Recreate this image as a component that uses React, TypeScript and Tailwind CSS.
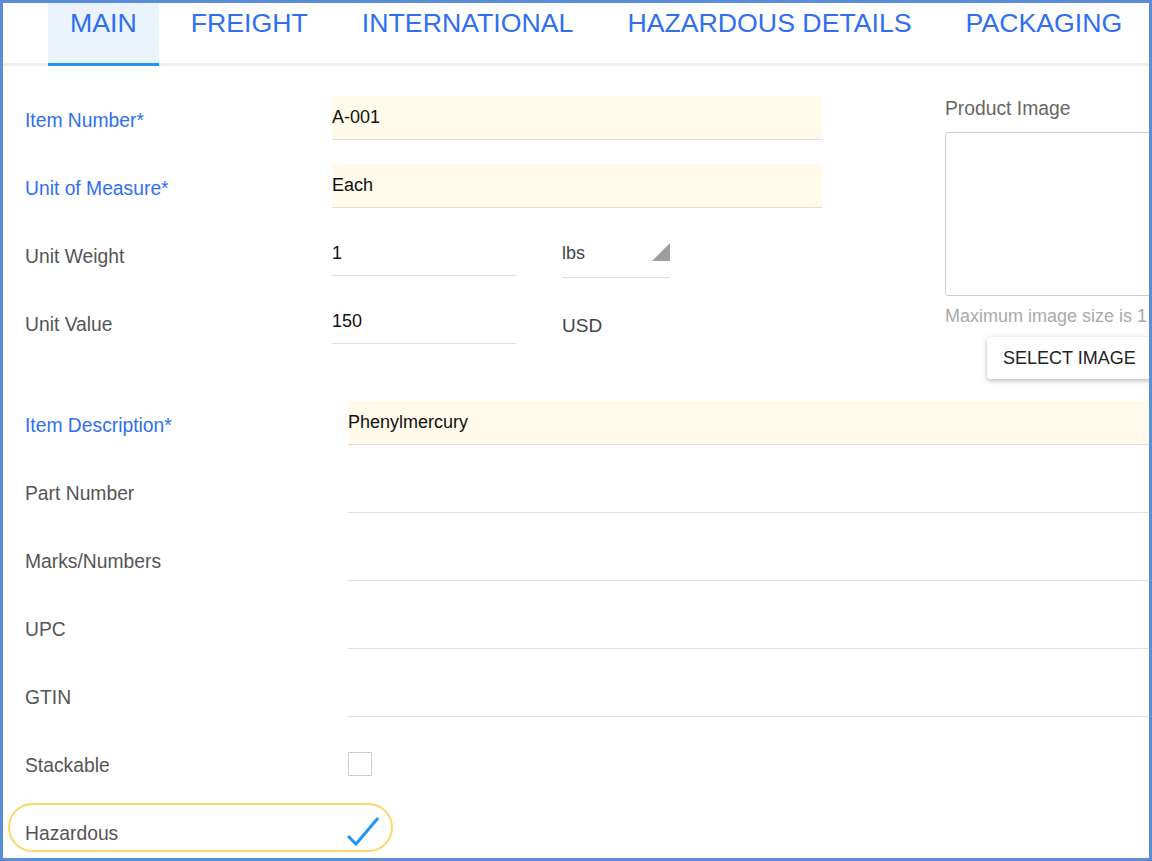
import React from "react";

const tabs = ["MAIN", "FREIGHT", "INTERNATIONAL", "HAZARDOUS DETAILS", "PACKAGING"];

function Label({ text, required }: { text: string; required?: boolean }) {
  return (
    <div
      className={
        "text-[19.3px] leading-[24px] pt-[5px] " +
        (required ? "text-[#2f6ff0]" : "text-[#555555]")
      }
    >
      {text}
    </div>
  );
}

export default function App() {
  return (
    <div className="w-[1152px] h-[861px] border-[3px] border-[#5a8fd8] bg-white overflow-hidden font-['Liberation_Sans',Arial,sans-serif]">
      {/* Tabs */}
      <div className="h-[63px] flex items-start gap-[10px] pl-[45px] border-b-[3px] border-[#eeeeee]">
        {tabs.map((t, i) => (
          <div
            key={t}
            className={
              "h-[63px] px-[22px] text-[26.7px] leading-[40px] text-[#2f6ff0] whitespace-nowrap " +
              (i === 0 ? "bg-[#ebf3fd] border-b-[3px] border-[#2196f3]" : "")
            }
          >
            {t}
          </div>
        ))}
      </div>

      {/* Body */}
      <div className="pl-[22px] pt-[30px]">
        {/* Section 1 */}
        <div className="flex items-start">
          <div className="w-[797px] shrink-0 flex flex-col gap-[24px]">
            <div className="flex items-center h-[44px]">
              <div className="w-[307px] shrink-0">
                <Label text="Item Number*" required />
              </div>
              <div className="w-[490px] h-[44px] bg-[#fffaea] border-b border-[#e0e0e0] flex items-center text-[18px] text-[#111] leading-none pb-[2px]">
                A-001
              </div>
            </div>
            <div className="flex items-center h-[44px]">
              <div className="w-[307px] shrink-0">
                <Label text="Unit of Measure*" required />
              </div>
              <div className="w-[490px] h-[44px] bg-[#fffaea] border-b border-[#e0e0e0] flex items-center text-[18px] text-[#111] leading-none pb-[2px]">
                Each
              </div>
            </div>
            <div className="flex items-center h-[44px]">
              <div className="w-[307px] shrink-0">
                <Label text="Unit Weight" />
              </div>
              <div className="w-[184px] h-[44px] border-b border-[#e0e0e0] flex items-center text-[18px] text-[#111] leading-none pb-[2px]">
                1
              </div>
              <div className="ml-[46px] w-[108px] h-[46px] mt-[2px] border-b border-[#e0e0e0] flex items-center justify-between text-[18px] text-[#444] leading-none pb-[4px]">
                <span>lbs</span>
                <svg width="18" height="18" viewBox="0 0 18 18" className="mb-[1px]">
                  <polygon points="18,0 18,18 0,18" fill="#9e9e9e" />
                </svg>
              </div>
            </div>
            <div className="flex items-center h-[44px]">
              <div className="w-[307px] shrink-0">
                <Label text="Unit Value" />
              </div>
              <div className="w-[184px] h-[44px] border-b border-[#e0e0e0] flex items-center text-[18px] text-[#111] leading-none pb-[2px]">
                150
              </div>
              <div className="ml-[46px] text-[19px] text-[#444] leading-[24px] pt-[7px]">USD</div>
            </div>
          </div>

          {/* Product image column */}
          <div className="ml-[123px] w-[260px] shrink-0 flex flex-col">
            <div className="text-[19.3px] leading-[24px] pt-[1px] text-[#666666]">Product Image</div>
            <div className="mt-[11px] h-[164px] border border-[#cfcfcf] rounded-[3px]" />
            <div className="mt-[9px] text-[18px] leading-[22px] text-[#aaaaaa] whitespace-nowrap">
              Maximum image size is 1 MB
            </div>
            <div className="mt-[10px] ml-[42px] w-[170px] h-[42px] bg-white rounded-[3px] shadow-[0_2px_4px_rgba(0,0,0,0.2),0_1px_8px_rgba(0,0,0,0.08)] flex items-center pl-[16px] text-[18px] text-[#222] whitespace-nowrap">
              SELECT IMAGE
            </div>
          </div>
        </div>

        {/* Section 2 */}
        <div className="mt-[22px] flex flex-col gap-[24px]">
          <div className="flex items-center h-[44px]">
            <div className="w-[323px] shrink-0">
              <Label text="Item Description*" required />
            </div>
            <div className="flex-1 h-[44px] bg-[#fffaea] border-b border-[#e0e0e0] flex items-center text-[18px] text-[#111] leading-none pb-[2px]">
              Phenylmercury
            </div>
          </div>
          {["Part Number", "Marks/Numbers", "UPC", "GTIN"].map((l) => (
            <div key={l} className="flex items-center h-[44px]">
              <div className="w-[323px] shrink-0">
                <Label text={l} />
              </div>
              <div className="flex-1 h-[44px] border-b border-[#e0e0e0]" />
            </div>
          ))}
          <div className="flex items-center h-[44px]">
            <div className="w-[323px] shrink-0">
              <Label text="Stackable" />
            </div>
            <div className="w-[24px] h-[24px] border border-[#cccccc] mt-[2px]" />
          </div>
          <div className="relative flex items-center h-[44px]">
            <div className="absolute left-[-17px] top-[-6px] w-[385px] h-[49px] rounded-full border-2 border-[#fdd766]" />
            <div className="w-[323px] shrink-0">
              <Label text="Hazardous" />
            </div>
            <svg width="34" height="30" viewBox="0 0 34 30" className="-ml-[1px] mt-[2px]">
              <polyline
                points="1,19 9,27 31,1"
                fill="none"
                stroke="#2196f3"
                strokeWidth="3"
              />
            </svg>
          </div>
        </div>
      </div>
    </div>
  );
}
